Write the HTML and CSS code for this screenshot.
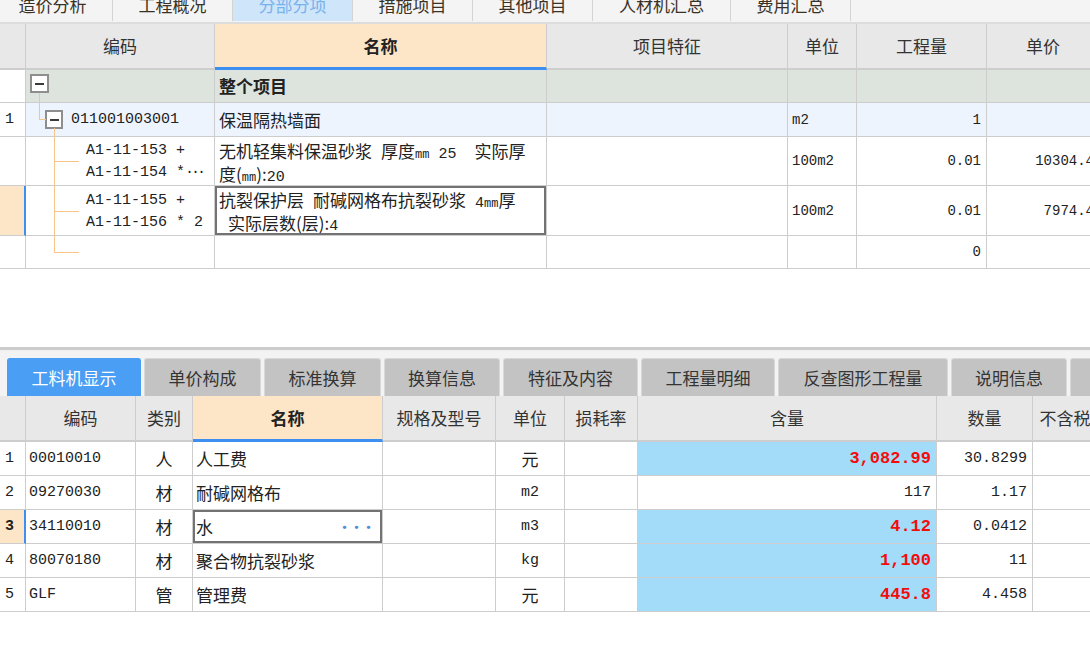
FILE: index.html
```html
<!DOCTYPE html>
<html lang="zh-CN">
<head>
<meta charset="utf-8">
<title>分部分项</title>
<link rel="stylesheet" href="styles.css">
</head>
<body>
<div class="top-tabs">
  <div class="top-tabs-inner">
    <div class="ttab">造价分析</div>
    <div class="ttab">工程概况</div>
    <div class="ttab active">分部分项</div>
    <div class="ttab">措施项目</div>
    <div class="ttab">其他项目</div>
    <div class="ttab wide">人材机汇总</div>
    <div class="ttab">费用汇总</div>
  </div>
</div>

<div class="grid top-grid">
  <div class="c h"></div>
  <div class="c h">编码</div>
  <div class="c h name">名称</div>
  <div class="c h">项目特征</div>
  <div class="c h">单位</div>
  <div class="c h">工程量</div>
  <div class="c h">单价</div>

  <div class="c rn"></div>
  <div class="c root code t0"><span class="tbox"></span></div>
  <div class="c root b">整个项目</div>
  <div class="c root"></div>
  <div class="c root"></div>
  <div class="c root"></div>
  <div class="c root"></div>

  <div class="c rn">1</div>
  <div class="c sel code t1"><span class="tbox"></span><span class="m15 codetxt">011001003001</span></div>
  <div class="c sel">保温隔热墙面</div>
  <div class="c sel"></div>
  <div class="c sel m14">m2</div>
  <div class="c sel num m14">1</div>
  <div class="c sel"></div>

  <div class="c rn"></div>
  <div class="c code tv th"><span class="m15 sub">A1-11-153 +<br>A1-11-154 *<span class="dots">···</span></span></div>
  <div class="c"><span class="txt">无机轻集料保温砂浆<span class="a14">&nbsp;</span>厚度<span class="a13">mm</span><span class="a14">&nbsp;25&nbsp;&nbsp;</span>实际厚<br>度(<span class="a13">mm</span>):<span class="a14">20</span></span></div>
  <div class="c"></div>
  <div class="c m14">100m2</div>
  <div class="c num m14">0.01</div>
  <div class="c num m14">10304.4</div>

  <div class="c rn cur"></div>
  <div class="c code tv th"><span class="m15 sub">A1-11-155 +<br>A1-11-156 * 2</span></div>
  <div class="c edit"><span class="txt">抗裂保护层<span class="a14">&nbsp;</span>耐碱网格布抗裂砂浆<span class="a14">&nbsp;4</span><span class="a13">mm</span>厚<br><span class="a14">&nbsp;</span>实际层数(层):<span class="a14">4</span></span></div>
  <div class="c"></div>
  <div class="c m14">100m2</div>
  <div class="c num m14">0.01</div>
  <div class="c num m14">7974.4</div>

  <div class="c rn"></div>
  <div class="c code tvh th"></div>
  <div class="c"></div>
  <div class="c"></div>
  <div class="c"></div>
  <div class="c num m14">0</div>
  <div class="c"></div>
</div>

<div class="blank"></div>
<div class="splitter"></div>

<div class="bottom-tabs">
  <div class="btab active w134">工料机显示</div>
  <div class="btab w117">单价构成</div>
  <div class="btab w117">标准换算</div>
  <div class="btab w116">换算信息</div>
  <div class="btab w135">特征及内容</div>
  <div class="btab w134">工程量明细</div>
  <div class="btab w170">反查图形工程量</div>
  <div class="btab w116">说明信息</div>
  <div class="btab w116"></div>
</div>

<div class="grid bottom-grid">
  <div class="c h"></div>
  <div class="c h">编码</div>
  <div class="c h">类别</div>
  <div class="c h name">名称</div>
  <div class="c h">规格及型号</div>
  <div class="c h">单位</div>
  <div class="c h">损耗率</div>
  <div class="c h">含量</div>
  <div class="c h">数量</div>
  <div class="c h">不含税市场价</div>

  <div class="c rn m15">1</div>
  <div class="c m15 tight">00010010</div>
  <div class="c ctr">人</div>
  <div class="c tight">人工费</div>
  <div class="c"></div>
  <div class="c ctr">元</div>
  <div class="c"></div>
  <div class="c num hl">3,082.99</div>
  <div class="c num m15">30.8299</div>
  <div class="c"></div>

  <div class="c rn m15">2</div>
  <div class="c m15 tight">09270030</div>
  <div class="c ctr">材</div>
  <div class="c tight">耐碱网格布</div>
  <div class="c"></div>
  <div class="c ctr m15">m2</div>
  <div class="c"></div>
  <div class="c num m15">117</div>
  <div class="c num m15">1.17</div>
  <div class="c"></div>

  <div class="c rn m15 cur bold">3</div>
  <div class="c m15 tight">34110010</div>
  <div class="c ctr">材</div>
  <div class="c tight edit">水<span class="more">···</span></div>
  <div class="c"></div>
  <div class="c ctr m15">m3</div>
  <div class="c"></div>
  <div class="c num hl">4.12</div>
  <div class="c num m15">0.0412</div>
  <div class="c"></div>

  <div class="c rn m15">4</div>
  <div class="c m15 tight">80070180</div>
  <div class="c ctr">材</div>
  <div class="c tight">聚合物抗裂砂浆</div>
  <div class="c"></div>
  <div class="c ctr m15">kg</div>
  <div class="c"></div>
  <div class="c num hl">1,100</div>
  <div class="c num m15">11</div>
  <div class="c"></div>

  <div class="c rn m15">5</div>
  <div class="c m15 tight">GLF</div>
  <div class="c ctr">管</div>
  <div class="c tight">管理费</div>
  <div class="c"></div>
  <div class="c ctr">元</div>
  <div class="c"></div>
  <div class="c num hl">445.8</div>
  <div class="c num m15">4.458</div>
  <div class="c"></div>
</div>
</body>
</html>
```

FILE: styles.css
```css
* { box-sizing: border-box; }

html, body {
  margin: 0;
  padding: 0;
}

body {
  width: 1090px;
  height: 664px;
  overflow: hidden;
  background: #ffffff;
  font-family: "Noto Sans CJK SC", "Noto Sans", sans-serif;
  color: #222222;
}

/* ---------- top tab strip ---------- */
.top-tabs {
  height: 24px;
  overflow: hidden;
  background: #f4f4f4;
  border-bottom: 2px solid #dcdcdc;
}

.top-tabs-inner {
  display: flex;
  height: 34px;
  margin-top: -13px;
  margin-left: -7px;
}

.ttab {
  flex: none;
  width: 120px;
  display: flex;
  align-items: center;
  justify-content: center;
  border-right: 1px solid #d4d4d4;
  font-size: 17px;
  color: #3a3226;
}

.ttab.wide { width: 138px; }

.ttab.active {
  background: #cfe5fa;
  color: #78b2ec;
}

/* ---------- grids ---------- */
.grid {
  display: grid;
}

.top-grid {
  width: 1100px;
  grid-template-columns: 26px 189px 332px 241px 69px 130px 113px;
  grid-template-rows: 46px 33px 34px 49px 50px 33px;
}

.bottom-grid {
  width: 1149px;
  grid-template-columns: 26px 110px 57px 190px 113px 69px 73px 299px 96px 116px;
  grid-template-rows: 46px 34px 34px 34px 34px 34px;
}

.c {
  position: relative;
  display: flex;
  align-items: center;
  padding: 0 4px;
  border-right: 1px solid #cdcdcd;
  border-bottom: 1px solid #cdcdcd;
  font-size: 17px;
  line-height: 22px;
  white-space: nowrap;
  overflow: hidden;
  background: #ffffff;
}

.txt {
  display: block;
  white-space: nowrap;
  line-height: 23px;
  padding-top: 1px;
}

.h {
  justify-content: center;
  background: #e8e8e8;
  color: #333333;
  border-bottom: 2px solid #cdcdcd;
}

.h.name {
  background: #fde6c8;
  font-weight: bold;
  color: #222222;
  border-bottom: 3px solid #3d8ff2;
}

.b { font-weight: bold; }
.bold { font-weight: bold; }

.root { background: #dde4de; }
.sel { background: #eef4fe; }

.rn {
  padding-left: 5px;
  font-family: "Liberation Mono", monospace;
  font-size: 15px;
}

.rn.cur {
  background: #fde6c8;
  border-right: 2px solid #3d8ff2;
}

.num {
  justify-content: flex-end;
  padding-right: 5px;
}

.ctr { justify-content: center; }

.tight { padding-left: 3px; }

.m15 {
  font-family: "Liberation Mono", monospace;
  font-size: 15px;
}

.m14 {
  font-family: "Liberation Mono", monospace;
  font-size: 14px;
}

.a13 {
  font-family: "Liberation Mono", monospace;
  font-size: 12px;
  line-height: 1;
}

.a14 {
  font-family: "Liberation Mono", monospace;
  font-size: 15px;
  line-height: 1;
}

.edit {
  box-shadow: inset 0 0 0 2px #737373;
}

.hl {
  background: #a2dcf8;
  color: #f20d0d;
  font-family: "Liberation Mono", monospace;
  font-weight: bold;
  font-size: 17px;
}

.more {
  margin-left: auto;
  margin-right: 4px;
  color: #4a8fe0;
  font-weight: bold;
  font-size: 13px;
  letter-spacing: -1px;
}

/* ---------- tree column ---------- */
.code { padding-left: 4px; }

.tbox {
  flex: none;
  display: flex;
  align-items: center;
  justify-content: center;
  width: 19px;
  height: 19px;
  border: 2px solid #8e8e8e;
  background: #ffffff;
}

.tbox::after {
  content: "";
  width: 9px;
  height: 2px;
  background: #3a3a3a;
}

.t0 { align-items: flex-start; padding-top: 4px; }
.t0::before {
  content: "";
  position: absolute;
  left: 13px;
  top: 23px;
  bottom: 0;
  width: 1px;
  background: #f8c489;
}

.t1 { padding-left: 19px; }
.t1 .tbox { width: 18px; height: 19px; }
.t1::before {
  content: "";
  position: absolute;
  left: 13px;
  top: 0;
  width: 6px;
  height: 16px;
  border-left: 1px solid #f8c489;
  border-bottom: 1px solid #f8c489;
}
.t1::after {
  content: "";
  position: absolute;
  left: 28px;
  top: 25px;
  bottom: 0;
  width: 1px;
  background: #f8c489;
}

.codetxt { margin-left: 8px; }

.tv::before {
  content: "";
  position: absolute;
  left: 28px;
  top: 0;
  bottom: 0;
  width: 1px;
  background: #f8c489;
}

.tvh::before {
  content: "";
  position: absolute;
  left: 28px;
  top: 0;
  height: 50%;
  width: 1px;
  background: #f8c489;
}

.th::after {
  content: "";
  position: absolute;
  left: 28px;
  top: 50%;
  width: 25px;
  height: 1px;
  background: #f8c489;
}

.sub {
  display: block;
  padding-left: 56px;
  padding-top: 2px;
  line-height: 22px;
  white-space: nowrap;
}

.dots { letter-spacing: -3px; }

/* ---------- middle blank & splitter ---------- */
.blank { height: 78px; }

.splitter {
  height: 4px;
  background: #f0f0f0;
  border-top: 3px solid #cccccc;
}

/* ---------- bottom tabs ---------- */
.bottom-tabs {
  display: flex;
  gap: 3px;
  height: 45px;
  padding: 7px 0 0 7px;
  background: #f3f3f3;
  overflow: hidden;
}

.btab {
  flex: none;
  height: 38px;
  display: flex;
  align-items: center;
  justify-content: center;
  background: #c3c3c3;
  border: 1px solid #d9d9d9;
  border-bottom: none;
  border-radius: 3px 3px 0 0;
  font-size: 17px;
  color: #343434;
}

.btab.active {
  background: #4a9ef4;
  border-color: #4a9ef4;
  color: #ffffff;
}

.w116 { width: 116px; }
.w117 { width: 117px; }
.w134 { width: 134px; }
.w135 { width: 135px; }
.w170 { width: 170px; }
```
